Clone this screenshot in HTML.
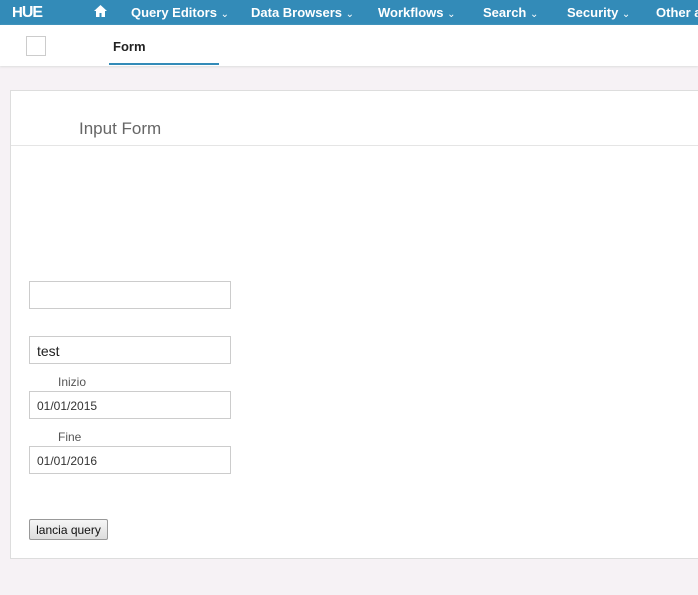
<!DOCTYPE html>
<html><head><style>
body{margin:0;width:698px;height:595px;overflow:hidden;background:#f6f2f5;font-family:"Liberation Sans",sans-serif;position:relative}
.nav{position:absolute;left:0;top:0;width:698px;height:25px;background:#338bb8;color:#fff;font-size:13px;font-weight:bold;white-space:nowrap}
.nav span{position:absolute;top:5px}
.nav i{font-style:normal;font-size:10px;font-weight:normal}
.sub{position:absolute;left:0;top:25px;width:698px;height:41px;background:#fff;box-shadow:0 1px 2px #ddd}
.card{position:absolute;left:10px;top:90px;width:700px;height:467px;background:#fff;border:1px solid #ddd}
.inp{position:absolute;left:29px;width:202px;height:26px;border:1px solid #ccc;background:#fff;font-size:12px;color:#333;box-sizing:border-box;padding:7px 0 0 7px}
.lbl{position:absolute;left:58px;font-size:12px;color:#555}
</style></head><body>
<div class="nav">
<span style="left:12px;top:4px;font-size:15px;letter-spacing:-1px">H<b style="font-size:16px">UE</b></span>
<span style="left:93px;top:4px">
<svg width="15" height="14" viewBox="0 0 15 14"><path d="M7.5 1L1 7h2v6h3.5V9h2v4H12V7h2z" fill="#fff"/></svg></span>
<span style="left:131px">Query Editors <i>&#8964;</i></span>
<span style="left:251px">Data Browsers <i>&#8964;</i></span>
<span style="left:378px">Workflows <i>&#8964;</i></span>
<span style="left:483px">Search <i>&#8964;</i></span>
<span style="left:567px">Security <i>&#8964;</i></span>
<span style="left:656px">Other a</span>
</div>
<div class="sub">
<div style="position:absolute;left:26px;top:11px;width:20px;height:20px;border:1px solid #ccc;box-sizing:border-box"></div>
<div style="position:absolute;left:113px;top:14px;font-size:13px;font-weight:bold;color:#222">Form</div>
<div style="position:absolute;left:109px;top:38px;width:110px;height:2px;background:#338bb8"></div>
</div>
<div class="card">
<div style="position:absolute;left:68px;top:28px;font-size:17px;color:#666">Input Form</div>
<div style="position:absolute;left:0;top:54px;width:700px;height:1px;background:#e5e5e5"></div>
</div>
<div class="inp" style="top:281px;height:28px"></div>
<div class="inp" style="top:336px;height:28px;font-size:14px;color:#222;padding-top:6px">test</div>
<div class="lbl" style="top:375px">Inizio</div>
<div class="inp" style="top:391px;height:28px">01/01/2015</div>
<div class="lbl" style="top:430px">Fine</div>
<div class="inp" style="top:446px;height:28px">01/01/2016</div>
<div style="position:absolute;left:29px;top:519px;width:79px;height:21px;border:1px solid #999;border-radius:2px;background:linear-gradient(#f6f6f6,#ddd);font-size:12px;color:#111;box-sizing:border-box;text-align:center;padding-top:3px">lancia query</div>
</body></html>
